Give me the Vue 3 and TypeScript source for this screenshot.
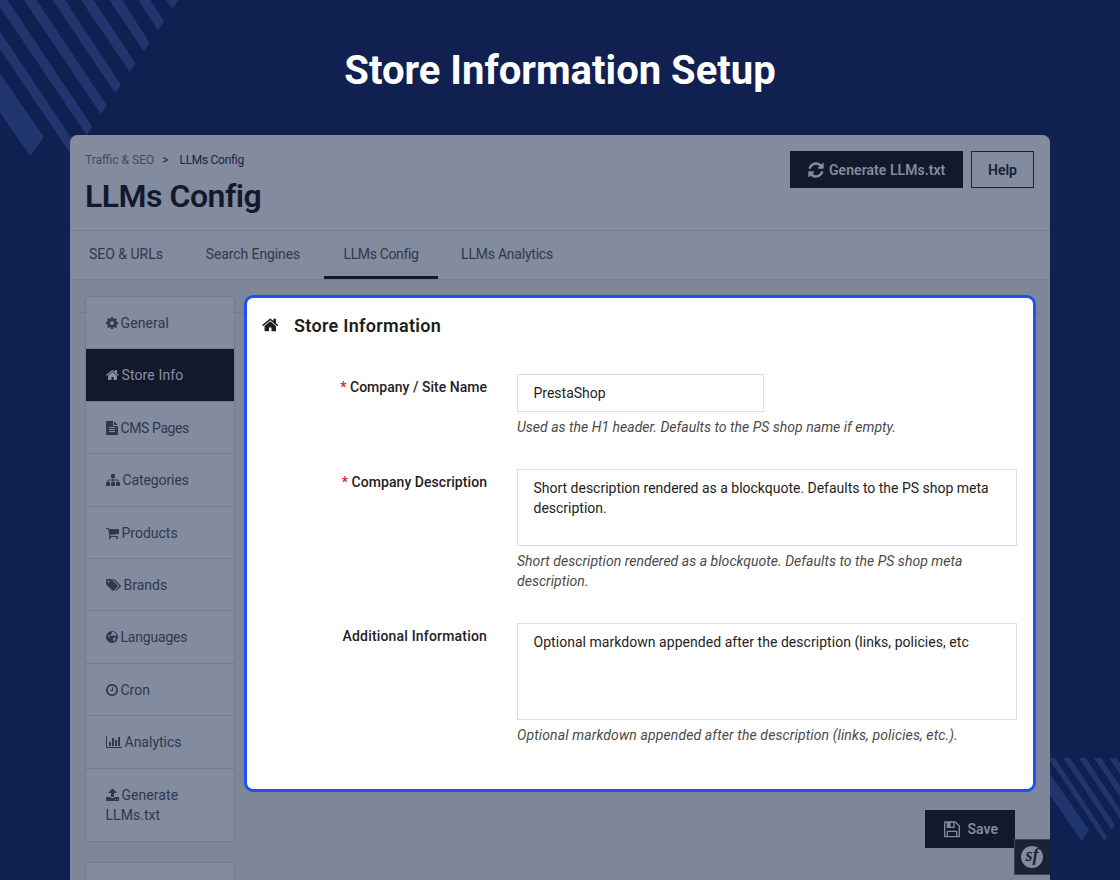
<script setup lang="ts">
interface IconDef { box: string; w: number; d: string }
interface NavItem { icon: string; label: string; cls: string; active?: boolean }

const companyDescription = 'Short description rendered as a blockquote. Defaults to the PS shop meta description.'
const additionalInfo = 'Optional markdown appended after the description (links, policies, etc'

const icons: Record<string, IconDef> = {
  cog: { box: '128 0 1536 1792', w: 12, d: 'M1152 896q0-106-75-181t-181-75-181 75-75 181 75 181 181 75 181-75 75-181zm512-109v222q0 12-8 23t-20 13l-185 28q-19 54-39 91 35 50 107 138 10 12 10 25t-9 23q-27 37-99 108t-94 71q-12 0-26-9l-138-108q-44 23-91 38-16 136-29 186-7 28-36 28h-222q-14 0-24.5-8.5t-11.5-21.5l-28-184q-49-16-90-37l-141 107q-10 9-25 9-14 0-25-11-126-114-165-168-7-10-7-23 0-12 8-23 15-21 51-66.5t54-70.5q-27-50-41-99l-183-27q-13-2-21-12.5t-8-23.5v-222q0-12 8-23t19-13l186-28q14-46 39-92-40-57-107-138-10-12-10-24 0-10 9-23 26-36 98.5-107.5t94.5-71.5q13 0 26 10l138 107q44-23 91-38 16-136 29-186 7-28 36-28h222q14 0 24.5 8.5t11.5 21.5l28 184q49 16 90 37l142-107q9-9 24-9 13 0 25 10 129 119 165 170 7 8 7 22 0 12-8 23-15 21-51 66.5t-54 70.5q26 50 41 98l183 28q13 2 21 12.5t8 23.5z' },
  home: { box: '64 0 1664 1792', w: 13, d: 'M1472 992v480q0 26-19 45t-45 19h-384v-384h-256v384h-384q-26 0-45-19t-19-45v-480q0-1 .5-3t.5-3l575-474 575 474q1 2 1 6zm223-69l-62 74q-8 9-21 11h-3q-13 0-21-7l-692-577-692 577q-12 8-24 7-13-2-21-11l-62-74q-8-10-7-23.5t11-21.5l719-599q32-26 76-26t76 26l244 204v-195q0-14 9-23t23-9h192q14 0 23 9t9 23v408l219 182q10 8 11 21.5t-7 23.5z' },
  file: { box: '128 0 1536 1792', w: 12, d: 'M1596 476q14 14 28 36h-472v-472q22 14 36 28zm-476 164h544v1056q0 40-28 68t-68 28h-1344q-40 0-68-28t-28-68v-1600q0-40 28-68t68-28h800v544q0 40 28 68t68 28zm160 736v-64q0-14-9-23t-23-9h-704q-14 0-23 9t-9 23v64q0 14 9 23t23 9h704q14 0 23-9t9-23zm0-256v-64q0-14-9-23t-23-9h-704q-14 0-23 9t-9 23v64q0 14 9 23t23 9h704q14 0 23-9t9-23zm0-256v-64q0-14-9-23t-23-9h-704q-14 0-23 9t-9 23v64q0 14 9 23t23 9h704q14 0 23-9t9-23z' },
  sitemap: { box: '0 0 1792 1792', w: 14, d: 'M1792 1248v320q0 40-28 68t-68 28h-320q-40 0-68-28t-28-68v-320q0-40 28-68t68-28h96v-192h-512v192h96q40 0 68 28t28 68v320q0 40-28 68t-68 28h-320q-40 0-68-28t-28-68v-320q0-40 28-68t68-28h96v-192h-512v192h96q40 0 68 28t28 68v320q0 40-28 68t-68 28h-320q-40 0-68-28t-28-68v-320q0-40 28-68t68-28h96v-192q0-52 38-90t90-38h512v-192h-96q-40 0-68-28t-28-68v-320q0-40 28-68t68-28h320q40 0 68 28t28 68v320q0 40-28 68t-68 28h-96v192h512q52 0 90 38t38 90v192h96q40 0 68 28t28 68z' },
  cart: { box: '64 0 1664 1792', w: 13, d: 'M704 1536q0 52-38 90t-90 38-90-38-38-90 38-90 90-38 90 38 38 90zm896 0q0 52-38 90t-90 38-90-38-38-90 38-90 90-38 90 38 38 90zm128-1088v512q0 24-16.5 42.5t-40.5 21.5l-1044 122q13 60 13 70 0 16-24 64h920q26 0 45 19t19 45-19 45-45 19h-1024q-26 0-45-19t-19-45q0-11 8-31.5t16-36 21.5-40 15.5-29.5l-177-823h-204q-26 0-45-19t-19-45 19-45 45-19h256q16 0 28.5 6.5t19.5 15.5 13 24.5 8 26 5.5 29.5 4.5 26h1201q26 0 45 19t19 45z' },
  tags: { box: '0 0 1920 1792', w: 15, d: 'M448 448q0-53-37.5-90.5t-90.5-37.5-90.5 37.5-37.5 90.5 37.5 90.5 90.5 37.5 90.5-37.5 37.5-90.5zm1067 576q0 53-37 90l-491 492q-39 37-91 37-53 0-90-37l-715-716q-38-37-64.5-101t-26.5-117v-416q0-52 38-90t90-38h416q53 0 117 26.5t102 64.5l715 714q37 39 37 91zm384 0q0 53-37 90l-491 492q-39 37-91 37-36 0-59-14t-53-45l470-470q37-37 37-90 0-52-37-91l-715-714q-38-38-102-64.5t-117-26.5h224q53 0 117 26.5t102 64.5l715 714q37 39 37 91z' },
  globe: { box: '128 0 1536 1792', w: 12, d: 'M896 128a768 768 0 1 0 0 1536a768 768 0 1 0 0-1536zM900 250L1100 270L1290 380L1420 540L1490 720L1380 700L1290 780L1190 700L1080 740L1000 680L900 760L800 700L740 780L640 700L700 560L820 520L900 430L830 350zM1130 980L1290 960L1400 1060L1320 1220L1180 1380L1060 1450L1090 1300L1020 1120zM380 600L470 680L560 850L640 940L560 1000L430 900L350 760z' },
  clock: { box: '128 0 1536 1792', w: 12, d: 'M1024 544v448q0 14-9 23t-23 9h-320q-14 0-23-9t-9-23v-64q0-14 9-23t23-9h224v-352q0-14 9-23t23-9h64q14 0 23 9t9 23zm416 352q0-148-73-273t-198-198-273-73-273 73-198 198-73 273 73 273 198 198 273 73 273-73 198-198 73-273zm224 0q0 209-103 385.5t-279.5 279.5-385.5 103-385.5-103-279.5-279.5-103-385.5 103-385.5 279.5-279.5 385.5-103 385.5 103 279.5 279.5 103 385.5z' },
  chart: { box: '0 0 2048 1792', w: 16, d: 'M640 896v512h-256v-512h256zm384-512v1024h-256v-1024h256zm1024 1152v128h-2048v-1536h128v1408h1920zm-640-896v768h-256v-768h256zm384-384v1152h-256v-1152h256z' },
  upload: { box: '64 0 1664 1792', w: 13, d: 'M1344 1472q0-26-19-45t-45-19-45 19-19 45 19 45 45 19 45-19 19-45zm256 0q0-26-19-45t-45-19-45 19-19 45 19 45 45 19 45-19 19-45zm128-224v320q0 40-28 68t-68 28h-1472q-40 0-68-28t-28-68v-320q0-40 28-68t68-28h427q21 56 70.5 92t110.5 36h256q61 0 110.5-36t70.5-92h427q40 0 68 28t28 68zm-325-648q-17 40-59 40h-256v448q0 26-19 45t-45 19h-256q-26 0-45-19t-19-45v-448h-256q-42 0-59-40-17-39 14-69l448-448q18-19 45-19t45 19l448 448q31 30 14 69z' },
}

const nav: NavItem[] = [
  { icon: 'cog', label: 'General', cls: 'general' },
  { icon: 'home', label: 'Store Info', cls: 'store', active: true },
  { icon: 'file', label: 'CMS Pages', cls: 'cms' },
  { icon: 'sitemap', label: 'Categories', cls: 'categories' },
  { icon: 'cart', label: 'Products', cls: 'products' },
  { icon: 'tags', label: 'Brands', cls: 'brands' },
  { icon: 'globe', label: 'Languages', cls: 'languages' },
  { icon: 'clock', label: 'Cron', cls: 'cron' },
  { icon: 'chart', label: 'Analytics', cls: 'analytics' },
  { icon: 'upload', label: 'Generate LLMs.txt', cls: 'generate' },
]
</script>

<template>
  <div class="page">
    <svg class="stripes" width="1120" height="880" viewBox="0 0 1120 880" aria-hidden="true">
      <g fill="#21366f">
        <path d="M0 73.5L43.7 136.7L30.3 156L0 112.5z" />
        <path d="M0 31.5L78 147.7L72.3 156.3L0 49.5z" />
        <path d="M0 0H7.5L92.3 126.7L86.7 135.3L0 7z" />
        <path d="M24 0H36.5L107 105.7L101 114.3z" />
        <path d="M52.5 0H65L121 84.7L115.3 93.3z" />
        <path d="M81 0H93.5L135.3 63.3L129.7 72z" />
        <path d="M109.5 0H122L149.7 42.7L143.7 51z" />
        <path d="M138 0H150.5L164 21.3L158 30z" />
        <path d="M166 0H178.5L172.3 9z" />
        <path d="M1050 774L1089 830L1081.7 841L1050 795z" />
        <path d="M1050 758H1054.7L1107.3 836.7L1104.3 841L1050 760.5z" />
        <path d="M1063.3 758H1070.3L1115 825L1112 830z" />
        <path d="M1078.7 758H1085.7L1120 809.5V818.5z" />
        <path d="M1094 758H1101L1120 786.5V797z" />
        <path d="M1109.3 758H1116.3L1120 763.5V774z" />
      </g>
    </svg>

    <h1 class="headline">Store Information Setup</h1>

    <div class="window">
      <header class="top">
        <div>
          <div class="crumbs"><span class="crumb-parent">Traffic &amp; SEO</span><span class="sep">&gt;</span><span class="crumb-here">LLMs Config</span></div>
          <h2 class="title">LLMs Config</h2>
        </div>
        <div class="actions">
          <button class="btn dark gen">
            <svg width="16" height="18" viewBox="128 0 1536 1792" fill="currentColor"><path d="M1639 1056q0 5-1 7-64 268-268 434.5t-478 166.5q-146 0-282.5-55t-243.5-157l-129 129q-19 19-45 19t-45-19-19-45v-448q0-26 19-45t45-19h448q26 0 45 19t19 45-19 45l-137 137q71 66 161 102t187 36q134 0 250-65t186-179q11-17 53-117 8-23 30-23h192q13 0 22.5 9.5t9.5 22.5zm25-800v448q0 26-19 45t-45 19h-448q-26 0-45-19t-19-45 19-45l138-138q-148-137-349-137-134 0-250 65t-186 179q-11 17-53 117-8 23-30 23h-199q-13 0-22.5-9.5t-9.5-22.5v-7q65-268 270-434.5t480-166.5q146 0 284 55.5t245 156.5l130-129q19-19 45-19t45 19 19 45z" /></svg>
            <span>Generate LLMs.txt</span>
          </button>
          <button class="btn help"><span>Help</span></button>
        </div>
      </header>

      <nav class="tabs">
        <a class="tab t1"><span>SEO &amp; URLs</span></a>
        <a class="tab t2"><span>Search Engines</span></a>
        <a class="tab t3 on"><span>LLMs Config</span></a>
        <a class="tab t4"><span>LLMs Analytics</span></a>
      </nav>

      <div class="body">
        <div class="rule"></div>
        <aside class="side">
          <ul class="menu">
            <li v-for="n in nav" :key="n.label" :class="['item', n.cls, { active: n.active }]">
              <svg class="ico" :width="icons[n.icon].w" height="14" :viewBox="icons[n.icon].box" fill="currentColor" fill-rule="evenodd"><path :d="icons[n.icon].d" /></svg><span class="lbl">{{ n.label }}</span>
            </li>
          </ul>
          <div class="menu second"></div>
        </aside>

        <main class="main">
          <section class="card">
            <h3 class="card-title">
              <svg width="16.5" height="18" viewBox="64 0 1664 1792" fill="currentColor"><path :d="icons.home.d" /></svg>
              <span>Store Information</span>
            </h3>
            <div class="row r1">
              <label class="lab"><i>*</i> <span class="l1">Company / Site Name</span></label>
              <div class="field">
                <input class="ctl short" value="PrestaShop" />
                <p class="hint h1">Used as the H1 header. Defaults to the PS shop name if empty.</p>
              </div>
            </div>
            <div class="row r2">
              <label class="lab"><i>*</i> <span class="l2">Company Description</span></label>
              <div class="field">
                <textarea class="ctl ta1" :value="companyDescription"></textarea>
                <p class="hint h2">Short description rendered as a blockquote. Defaults to the PS shop meta description.</p>
              </div>
            </div>
            <div class="row r3">
              <label class="lab"><span class="l3">Additional Information</span></label>
              <div class="field">
                <textarea class="ctl ta2" :value="additionalInfo"></textarea>
                <p class="hint h3">Optional markdown appended after the description (links, policies, etc.).</p>
              </div>
            </div>
          </section>
          <div class="foot">
            <button class="btn dark save">
              <svg width="16" height="18.7" viewBox="128 0 1536 1792" fill="currentColor"><path d="M512 1536h768v-384h-768v384zm896 0h128v-896q0-14-10-38.5t-20-34.5l-281-281q-10-10-34-20t-39-10v416q0 40-28 68t-68 28h-576q-40 0-68-28t-28-68v-416h-128v1280h128v-416q0-40 28-68t68-28h832q40 0 68 28t28 68v416zm-384-928v-320q0-13-9.5-22.5t-22.5-9.5h-192q-13 0-22.5 9.5t-9.5 22.5v320q0 13 9.5 22.5t22.5 9.5h192q13 0 22.5-9.5t9.5-22.5zm640 32v928q0 40-28 68t-68 28h-1344q-40 0-68-28t-28-68v-1344q0-40 28-68t68-28h928q40 0 88 20t76 48l280 280q28 28 48 76t20 88z" /></svg>
              <span>Save</span>
            </button>
          </div>
        </main>
      </div>

      <div class="badge"><span class="disc"><span>sf</span></span></div>
    </div>
  </div>
</template>

<style>
body { margin: 0; background: #102051; }
</style>

<style scoped>
* { box-sizing: border-box; }
.page { position: relative; width: 1120px; height: 880px; overflow: hidden; background: #102051; font-family: Roboto, "Noto Sans", sans-serif; font-size: 14px; line-height: 20px; color: #30384d; }
.stripes { position: absolute; left: 0; top: 0; }
.headline { margin: 0; height: 135px; padding-top: 47px; text-align: center; color: #fff; font-size: 40px; line-height: 48px; font-weight: 700; position: relative; }
.window { position: relative; width: 980px; height: 745px; margin: 0 auto; background: #7e8799; border-radius: 8px 8px 0 0; overflow: hidden; }
.top { height: 96px; display: flex; justify-content: space-between; padding: 15px 16px 0 15px; background: #838b9e; border-bottom: 1px solid #717a8e; }
.crumbs { display: flex; font-size: 12px; line-height: 20px; color: #1c2438; }
.crumb-parent { color: #424b60; }
.crumb-here { letter-spacing: -0.3px; }
.sep { margin: 0 11px 0 8px; }
.title { margin: 7px 0 0; font-size: 32px; line-height: 38px; font-weight: 600; letter-spacing: -0.5px; color: #12192c; white-space: nowrap; }
.actions { display: flex; gap: 8px; padding-top: 1px; }
.btn { height: 37px; display: flex; align-items: center; padding: 0; margin: 0; font: 600 14px/20px Roboto, sans-serif; border: 1px solid #1c2439; background: transparent; color: #171e32; white-space: nowrap; }
.btn.dark { background: #12192c; color: #838b9e; border-color: #12192c; }
.gen { width: 173px; padding-left: 17px; gap: 5px; letter-spacing: 0.05px; }
.help { width: 63px; justify-content: center; }
.tabs { height: 49px; display: flex; background: #838b9e; border-bottom: 1px solid #757e91; }
.tab { height: 48px; line-height: 46px; text-align: center; white-space: nowrap; }
.t1 { width: 112px; }
.t2 { width: 142px; letter-spacing: -0.1px; }
.t3 { width: 114px; letter-spacing: -0.35px; }
.t4 { width: 138px; letter-spacing: -0.23px; }
.tab.on { border-bottom: 3px solid #12192c; }
.body { position: relative; display: flex; padding: 15px 14px 0 15px; gap: 9px; }
.rule { position: absolute; left: 10px; right: 10px; top: 32px; height: 1px; background: #727b8f; }
.side { position: relative; width: 150px; flex: none; padding-top: 1px; }
.menu { margin: 0; padding: 0; list-style: none; border: 1px solid #717a8e; border-radius: 4px; background: #838b9e; overflow: hidden; }
.item { height: 52.4px; padding: 16px 19.5px 0 19.5px; border-bottom: 1px solid #717a8e; line-height: 20px; }
.item.active { background: #12192c; color: #8790a3; }
.ico { vertical-align: -2px; margin-right: 3px; }
.general .lbl, .store .lbl { letter-spacing: 0.12px; }
.cms .lbl { letter-spacing: -0.4px; }
.categories .lbl { letter-spacing: -0.1px; }
.languages .lbl { letter-spacing: -0.2px; }
.generate .lbl { letter-spacing: 0.05px; }
.item:last-child { height: 72px; border: 0; }
.second { margin-top: 20px; height: 60px; }
.main { position: relative; flex: none; width: 792px; }
.card { width: 791.5px; height: 496.5px; background: #fff; border: 3px solid #2350f5; border-radius: 9px; color: #24221f; }
.card-title { margin: 0; height: 76px; padding: 17px 0 0 14.5px; display: flex; gap: 16px; font-size: 18px; line-height: 22px; font-weight: 600; letter-spacing: 0.3px; color: #1d1d1b; }
.card-title svg { margin-top: 1px; }
.row { display: flex; gap: 30px; }
.r1 { height: 95px; }
.r2 { height: 154px; }
.lab { width: 240px; text-align: right; font-weight: 500; padding-top: 3px; white-space: nowrap; }
.lab i { color: #c9242e; font-style: normal; }
.l1 { letter-spacing: 0.02px; }
.l2 { letter-spacing: 0.06px; }
.l3 { letter-spacing: 0.18px; }
.field { width: 500.4px; }
.ctl { display: block; margin: 0; width: 100%; border: 1px solid #ddd; border-radius: 0; padding: 8px 15.5px; font: 14px/20px Roboto, sans-serif; color: #24221f; background: #fff; resize: none; overflow: hidden; outline: 0; }
.short { width: 247px; height: 38px; }
.ta1 { height: 77px; letter-spacing: -0.01px; }
.ta2 { height: 97px; letter-spacing: 0.04px; }
.hint { margin: 5px 0 0; font-style: italic; color: #4b4a48; }
.h1 { letter-spacing: 0.02px; }
.h2 { letter-spacing: 0.035px; }
.h3 { letter-spacing: 0.12px; }
.foot { display: flex; justify-content: flex-end; padding: 18.5px 21px 0 0; }
.save { width: 90px; height: 38px; padding-left: 17.5px; gap: 8px; }
.badge { position: absolute; right: 0; top: 704px; width: 36px; height: 36px; background: #1a2336; border: 1px solid #3b4458; border-right: 0; display: flex; align-items: center; justify-content: center; padding-right: 1px; }
.disc { width: 22px; height: 22px; border-radius: 50%; background: #838b9e; color: #1a2336; font: italic 700 18px/19px "Liberation Serif", serif; text-align: center; }
</style>
